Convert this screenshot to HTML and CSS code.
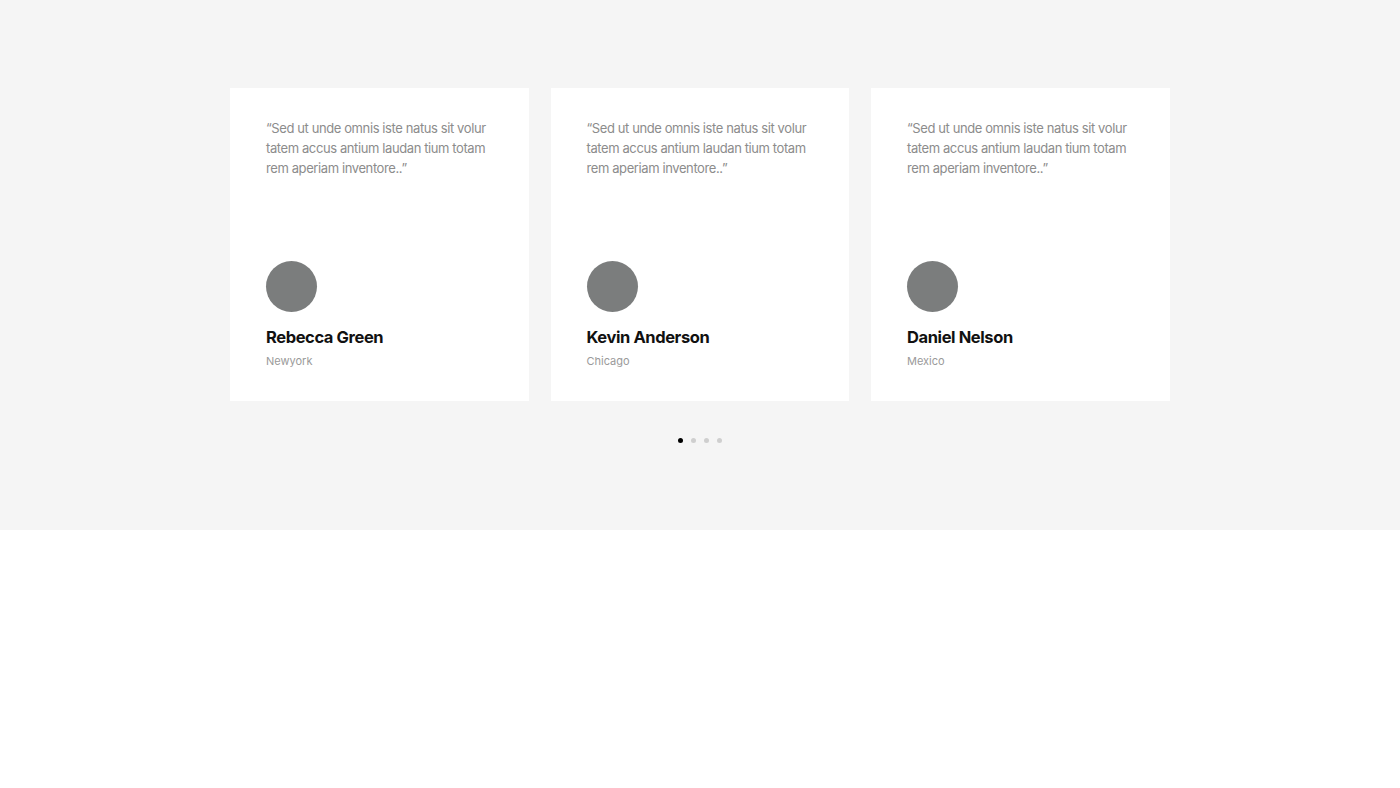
FILE: index.html
```html
<!DOCTYPE html>
<html>
<head>
<meta charset="utf-8">
<title>Testimonials</title>
<link rel="stylesheet" href="styles.css">
</head>
<body>
<section class="testimonials">
  <div class="cards">
    <div class="card">
      <p class="quote">“Sed ut unde omnis iste natus sit volur tatem accus antium laudan tium totam rem aperiam inventore..”</p>
      <div class="avatar"></div>
      <h3 class="name">Rebecca Green</h3>
      <span class="place">Newyork</span>
    </div>
    <div class="card">
      <p class="quote">“Sed ut unde omnis iste natus sit volur tatem accus antium laudan tium totam rem aperiam inventore..”</p>
      <div class="avatar"></div>
      <h3 class="name">Kevin Anderson</h3>
      <span class="place">Chicago</span>
    </div>
    <div class="card">
      <p class="quote">“Sed ut unde omnis iste natus sit volur tatem accus antium laudan tium totam rem aperiam inventore..”</p>
      <div class="avatar"></div>
      <h3 class="name">Daniel Nelson</h3>
      <span class="place">Mexico</span>
    </div>
  </div>
  <div class="dots">
    <span class="dot active"></span>
    <span class="dot"></span>
    <span class="dot"></span>
    <span class="dot"></span>
  </div>
</section>
</body>
</html>
```

FILE: styles.css
```css
body {
   margin: 0;
   background-color: white;
   font-family: Inter, "Noto Sans", sans-serif;
}

.testimonials {
   background-color: #f5f5f5;
   height: 530px;
   padding-top: 88px;
   box-sizing: border-box;
}

.cards {
   display: flex;
   gap: 22px;
   width: 940px;
   margin: 0 auto;
   padding-left: 0;
   box-sizing: border-box;
}

.card {
   width: 298.5px;
   height: 313px;
   box-sizing: border-box;
   background-color: white;
   padding: 30px 30px 32px 36px;
   display: flex;
   flex-direction: column;
}

.quote {
   margin: 0;
   font-size: 13px;
   line-height: 20px;
   color: #8c8c8c;
   letter-spacing: -0.4px;
   height: 143px;
}

.avatar {
   width: 51px;
   height: 51px;
   border-radius: 50%;
   background-color: #7b7d7d;
}

.name {
   margin: 13px 0 0 0;
   font-size: 16.5px;
   line-height: 24px;
   font-weight: 700;
   color: #111;
   letter-spacing: -0.4px;
}

.place {
   margin-top: 4px;
   font-size: 11px;
   line-height: 16px;
   color: #9a9a9a;
}

.dots {
   display: flex;
   justify-content: center;
   gap: 8px;
   margin-top: 37px;
}

.dot {
   width: 5px;
   height: 5px;
   border-radius: 50%;
   background-color: #cfcfcf;
}

.dot.active {
   background-color: #000;
}
```
